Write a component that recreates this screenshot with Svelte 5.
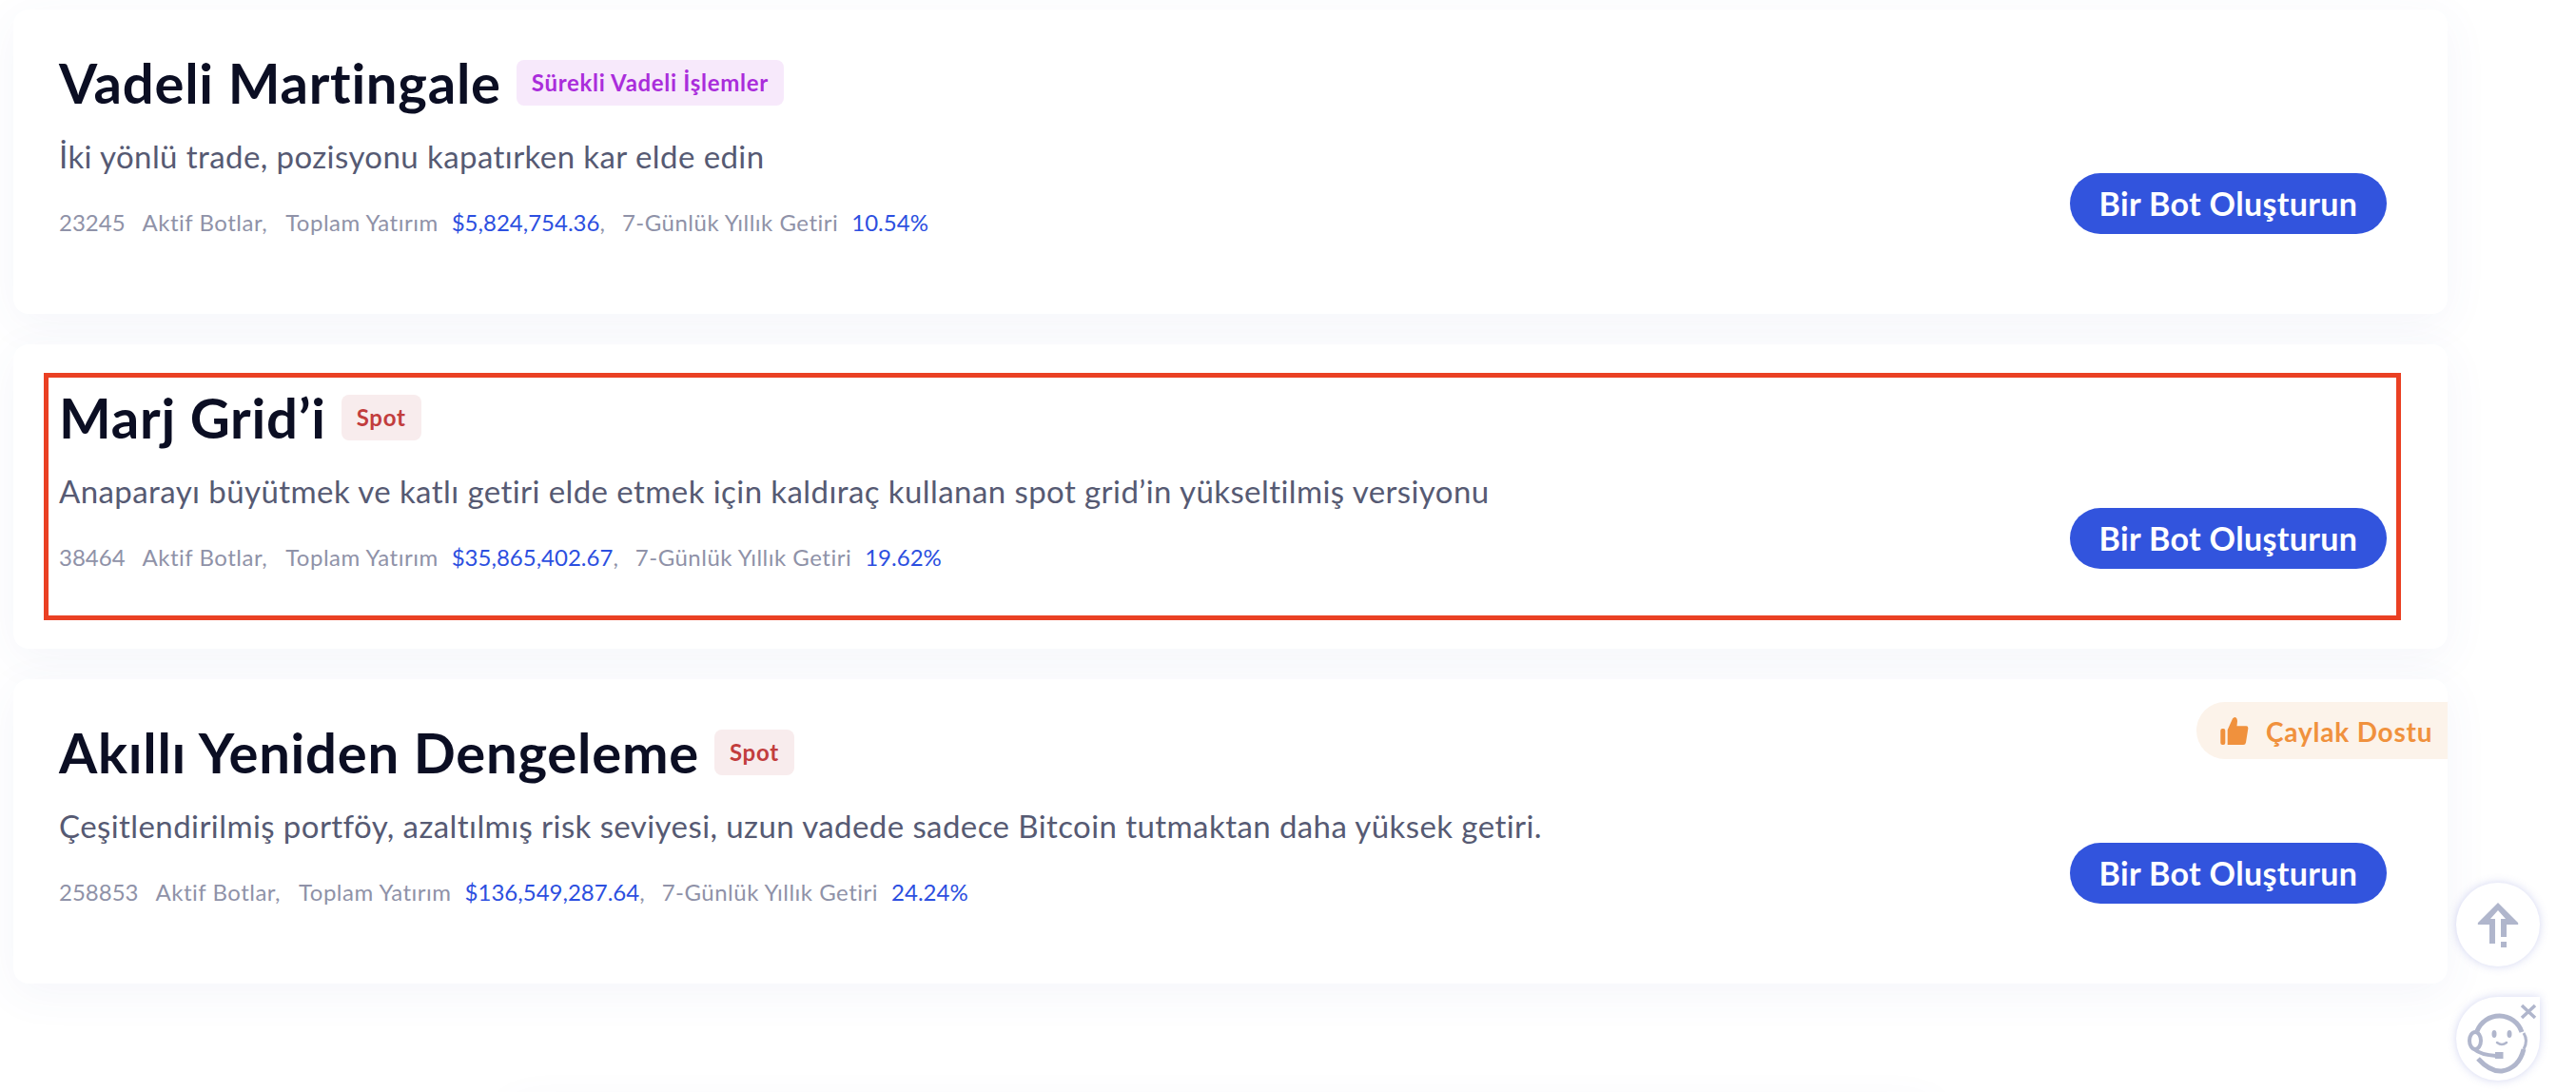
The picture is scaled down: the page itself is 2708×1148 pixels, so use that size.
<script>
  const bots = [
    {
      title: "Vadeli Martingale",
      badge: "Sürekli Vadeli İşlemler",
      badgeType: "futures",
      desc: "İki yönlü trade, pozisyonu kapatırken kar elde edin",
      count: "23245",
      total: "$5,824,754.36",
      apy: "10.54%",
    },
    {
      title: "Marj Grid’i",
      badge: "Spot",
      badgeType: "spot",
      desc: "Anaparayı büyütmek ve katlı getiri elde etmek için kaldıraç kullanan spot grid’in yükseltilmiş versiyonu",
      count: "38464",
      total: "$35,865,402.67",
      apy: "19.62%",
      marked: true,
    },
    {
      title: "Akıllı Yeniden Dengeleme",
      badge: "Spot",
      badgeType: "spot",
      desc: "Çeşitlendirilmiş portföy, azaltılmış risk seviyesi, uzun vadede sadece Bitcoin tutmaktan daha yüksek getiri.",
      count: "258853",
      total: "$136,549,287.64",
      apy: "24.24%",
      rookie: true,
    },
  ];
</script>

<main class="page">
  <div class="list">
    {#each bots as bot}
      <section class="card">
        <div class="info">
          <div class="head">
            <h3>{bot.title}</h3>
            <span class="badge {bot.badgeType}">{bot.badge}</span>
          </div>
          <p class="desc">{bot.desc}</p>
          <p class="meta">
            <span>{bot.count}</span><span class="label">Aktif Botlar,</span><span class="label">Toplam Yatırım</span><b>{bot.total}</b><span>,</span><span class="label">7-Günlük Yıllık Getiri</span><b>{bot.apy}</b>
          </p>
        </div>
        <button>Bir Bot Oluşturun</button>
        {#if bot.rookie}
          <div class="rookie">
            <svg width="30" height="30" viewBox="0 0 30 30" aria-hidden="true">
              <rect x="0.3" y="13" width="5" height="17" rx="2" fill="#f0913d" />
              <path d="M7.7 14.3 L13 2.5 Q14 0.7 16 1 Q18 2 18 5 L17.5 10.3 H27.5 Q29.6 10.5 29.3 13 L27 27.5 Q26.6 30 24.3 30 H7.7 Z" fill="#f0913d" />
            </svg>
            <span>Çaylak Dostu</span>
          </div>
        {/if}
        {#if bot.marked}
          <div class="mark"></div>
        {/if}
      </section>
    {/each}
  </div>
  <div class="edge"></div>

  <aside class="tools">
    <button class="round" aria-label="Yukarı">
      <svg width="88" height="88" viewBox="0 0 88 88">
        <path d="M44 21 L65 42 Q66 44 64 44 H53 V57 H47 V38 H52 L44 29 L36 38 H41 V64 H35 V44 H24 Q22 44 23 42 Z" fill="#b0b6cc" />
        <rect x="47" y="62" width="6" height="6" fill="#b0b6cc" />
      </svg>
    </button>
    <button class="round chat" aria-label="Destek">
      <svg width="88" height="88" viewBox="0 0 88 88" fill="none" stroke="#b0b6cc" stroke-width="5">
        <path d="M22 36 A25 25 0 0 1 69 37" />
        <path d="M23 65 Q36 79 48 78 Q66 75 71 55" />
        <path d="M71 38 Q76 46 71 55" stroke-width="3" />
        <ellipse cx="20" cy="46" rx="6" ry="9" stroke-width="4" />
        <path d="M19 55 Q26 61 42 62" stroke-width="4" />
        <rect x="41" y="58" width="8.5" height="7" fill="#b0b6cc" stroke="none" />
        <ellipse cx="40" cy="39" rx="2.5" ry="4" fill="#b0b6cc" stroke="none" />
        <ellipse cx="56" cy="39" rx="2.5" ry="4" fill="#b0b6cc" stroke="none" />
        <path d="M43 48 Q48 52 53 48" stroke-width="2.5" stroke-linecap="round" />
        <path d="M69 9 L83 22 M83 9 L69 22" stroke-width="3.5" />
      </svg>
    </button>
  </aside>
</main>

<style>
  :global(body) {
    background: #fff;
    overflow: hidden;
  }

  .page {
    position: relative;
    height: 1148px;
    overflow: hidden;
    padding: 10px 0 0 14px;
    box-sizing: border-box;
    font-family: Lato, "Noto Sans", sans-serif;
  }

  .list {
    width: 2559px;
    display: flex;
    flex-direction: column;
    gap: 32px;
  }

  .card {
    position: relative;
    height: 320px;
    box-sizing: border-box;
    padding: 47px 64px 84px 48px;
    display: flex;
    justify-content: space-between;
    align-items: flex-end;
    background: #fff;
    border-radius: 16px;
    box-shadow: 0 10px 48px rgba(72, 88, 170, 0.06);
  }

  .info {
    align-self: flex-start;
  }

  .head {
    display: flex;
    align-items: center;
    gap: 16px;
    height: 60px;
  }

  h3 {
    margin: 0;
    font-size: 58px;
    font-weight: 700;
    line-height: 60px;
    letter-spacing: 0.75px;
    color: #0b0e23;
  }

  .badge {
    height: 48px;
    line-height: 48px;
    padding: 0 16px;
    border-radius: 8px;
    font-size: 24px;
    font-weight: 700;
    letter-spacing: 0.7px;
  }

  .futures {
    background: #f7e9fb;
    color: #aa2ddb;
  }

  .spot {
    background: #f8eced;
    color: #c23d3d;
  }

  .desc {
    margin: 25px 0 0;
    font-size: 33px;
    line-height: 44px;
    letter-spacing: 0.42px;
    color: #565a73;
  }

  .meta {
    margin: 30px 0 0;
    display: flex;
    font-size: 24px;
    line-height: 36px;
    color: #8f92a8;
  }

  .label {
    margin-left: 18px;
    letter-spacing: 0.5px;
  }

  .label + .label {
    margin-left: 19px;
  }

  .meta b {
    margin-left: 14px;
    font-weight: 400;
    color: #2c4fe0;
  }

  button {
    border: 0;
    font-family: inherit;
  }

  .card > button {
    width: 333px;
    height: 64px;
    padding-bottom: 2px;
    border-radius: 32px;
    background: #3254dd;
    color: #fff;
    font-size: 34px;
    font-weight: 700;
    letter-spacing: 0.35px;
  }

  .rookie {
    position: absolute;
    top: 24px;
    right: 0;
    height: 60px;
    width: 264px;
    box-sizing: border-box;
    padding-left: 25px;
    display: flex;
    align-items: center;
    gap: 18px;
    background: #fcf3ea;
    border-radius: 30px 0 0 30px;
    color: #f0913d;
    font-size: 28px;
    font-weight: 700;
    letter-spacing: 0.8px;
  }

  .rookie span {
    padding-top: 2px;
  }

  .mark {
    position: absolute;
    left: 32px;
    top: 30px;
    width: 2478px;
    height: 260px;
    box-sizing: border-box;
    border: 5px solid #ea4023;
    pointer-events: none;
  }

  .edge {
    width: 1500px;
    height: 80px;
    margin: 126px 0 0 520px;
    box-shadow: 0 0 48px rgba(72, 88, 170, 0.04);
  }

  .tools {
    position: absolute;
    left: 2582px;
    top: 928px;
    display: flex;
    flex-direction: column;
    gap: 32px;
  }

  .round {
    width: 88px;
    height: 88px;
    padding: 0;
    background: #fff;
    border-radius: 50%;
    box-shadow: 0 0 10px rgba(110, 120, 210, 0.3);
  }

  .round svg {
    display: block;
  }

  .chat {
    border-top-right-radius: 0;
  }
</style>
